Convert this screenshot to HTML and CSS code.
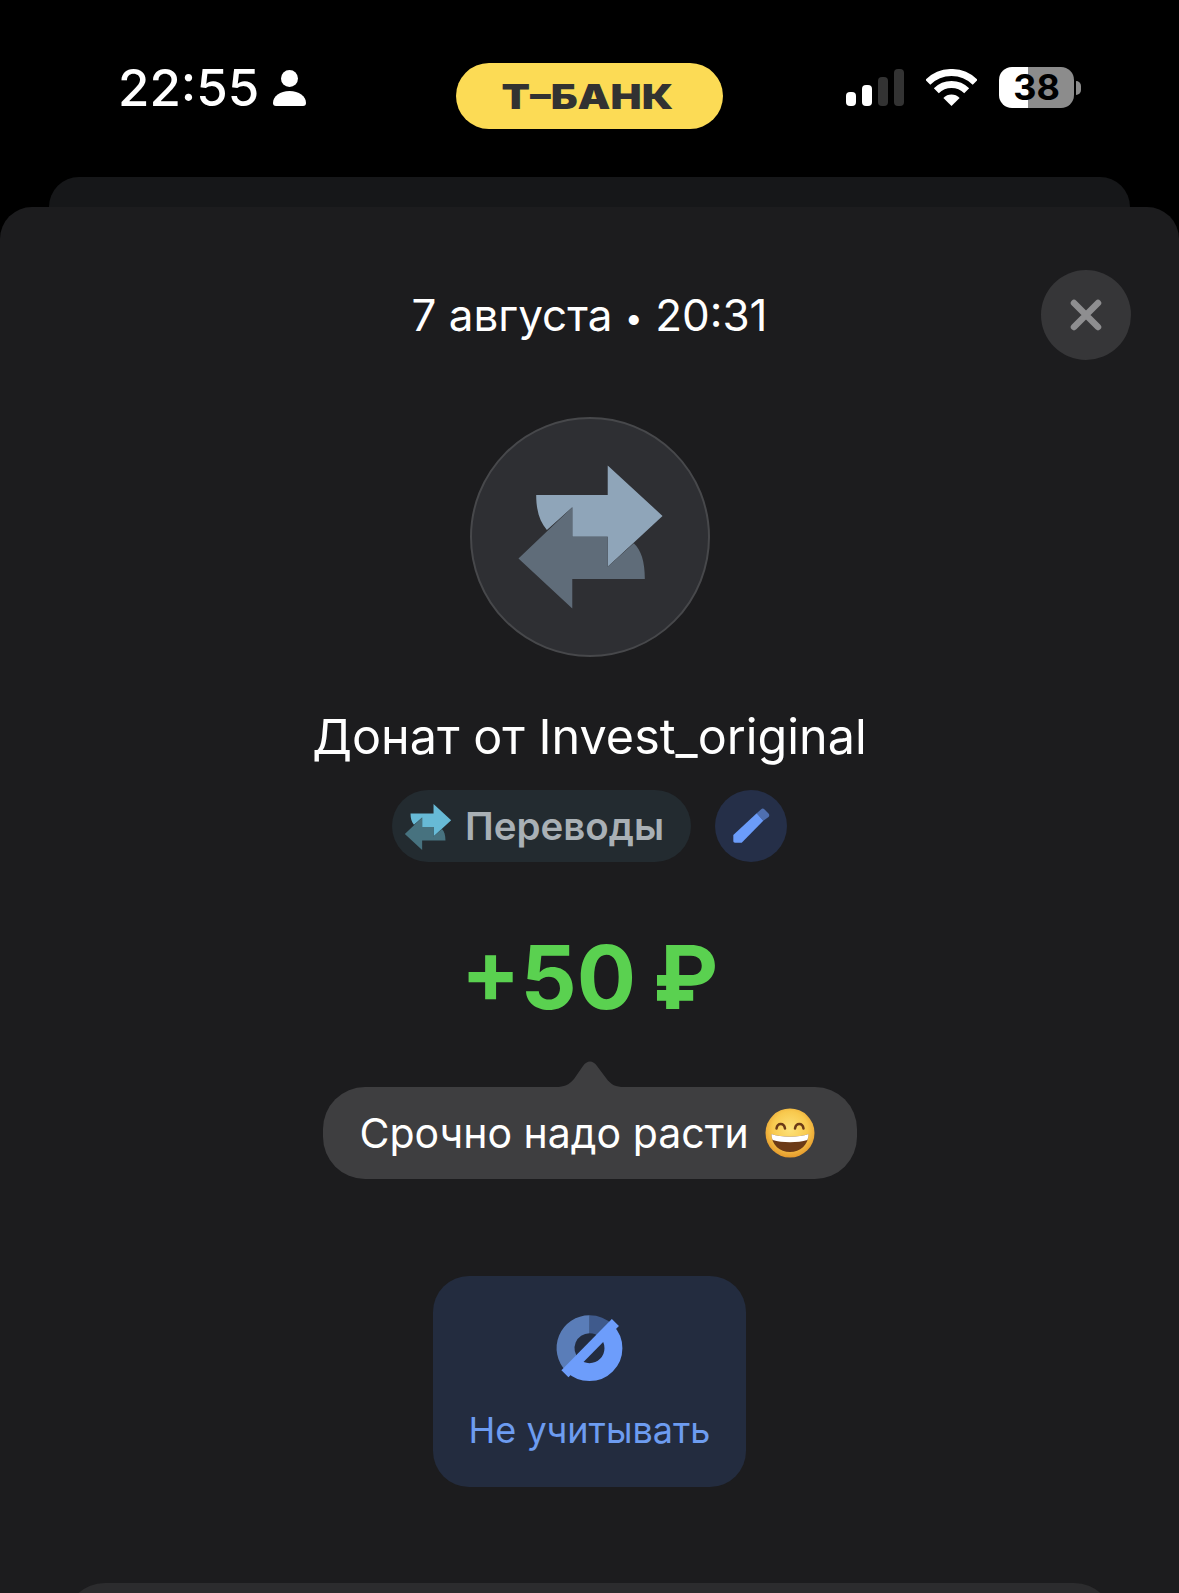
FILE: index.html
```html
<!DOCTYPE html>
<html lang="ru">
<head>
    <meta charset="UTF-8">
    <meta name="viewport" content="width=device-width, initial-scale=1.0">
    <title>Донат от Invest_original</title>
    <link rel="stylesheet" href="styles.css">
</head>
<body>
<div class="screen">
    <div class="status-bar">
        <div class="status-left">
            <span class="clock">22:55</span>
            <svg class="person" viewBox="0 0 33 36">
                <circle cx="16.5" cy="8.5" r="8.5"/>
                <path d="M0 33C0 26 7 21 16.5 21S33 26 33 33C33 35 32 36 30 36H3C1 36 0 35 0 33Z"/>
            </svg>
        </div>
        <div class="bank-pill"><span class="bank-name">Т–БАНК</span></div>
        <div class="status-right">
            <div class="signal">
                <span class="bar bar-1"></span>
                <span class="bar bar-2"></span>
                <span class="bar bar-3"></span>
                <span class="bar bar-4"></span>
            </div>
            <svg class="wifi" viewBox="0 0 51 37">
                <path class="wifi-arc" d="M1.8 13.3A33.5 33.5 0 0 1 49.2 13.3"/>
                <path class="wifi-arc" d="M10.3 21.8A21.5 21.5 0 0 1 40.7 21.8"/>
                <path d="M25.5 37L17.4 28.9A11.5 11.5 0 0 1 33.6 28.9Z"/>
            </svg>
            <div class="battery">38</div>
            <span class="battery-tip"></span>
        </div>
    </div>

    <div class="sheet-back"></div>

    <div class="sheet">
        <button class="close-btn">
            <svg viewBox="0 0 32 32"><path d="M4 4L28 28M28 4L4 28"/></svg>
        </button>

        <div class="date">7 августа <span class="date-dot">•</span> 20:31</div>

        <div class="avatar">
            <svg viewBox="60 52 718 718">
                <path class="arrow-light" d="M258 285H472V197L636 348L472 500V410H366V322L290 390C268 365 258 330 258 285Z"/>
                <path class="arrow-dark" d="M205 475L366 322V410H472V500L550 430C572 450 583 485 583 537H366V625Z"/>
            </svg>
        </div>

        <div class="title">Донат от Invest_original</div>

        <div class="tags">
            <div class="category">
                <svg class="category-icon" viewBox="205 197 431 428">
                    <path class="chip-light" d="M258 285H472V197L636 348L472 500V410H366V322L290 390C268 365 258 330 258 285Z"/>
                    <path class="chip-dark" d="M205 475L366 322V410H472V500L550 430C572 450 583 485 583 537H366V625Z"/>
                </svg>
                <span>Переводы</span>
            </div>
            <div class="edit-btn">
                <svg viewBox="0 0 72 72">
                    <path class="pencil-cap" d="M41.700 23.300L46.200 19.300C47 18.300 48.500 18.300 49.300 19.300L53.500 23.500C54.500 24.500 54.500 26 53.500 27L48.300 30.700Z"/>
                    <path class="pencil-body" d="M41.700 23.300L48.300 30.700L26.700 52.700H20C19 52.700 18.300 52 18.300 51V45Z"/>
                </svg>
            </div>
        </div>

        <div class="amount">+50 ₽</div>

        <div class="comment">
            <svg class="comment-tip" viewBox="0 0 68 28">
                <path d="M0 28C8 28 13 26 18 20L27 7C31 1 37 1 41 7L50 19C55 26 60 28 68 28Z"/>
            </svg>
            <span>Срочно надо расти</span>
            <svg class="emoji" viewBox="0 0 50 50" role="img" aria-label="😄">
                <defs>
                    <radialGradient id="face" cx="50%" cy="42%" r="58%">
                        <stop offset="0%" stop-color="#fde27a"/>
                        <stop offset="62%" stop-color="#f8c94e"/>
                        <stop offset="100%" stop-color="#e59a2c"/>
                    </radialGradient>
                </defs>
                <circle cx="25" cy="25" r="24.5" fill="url(#face)"/>
                <path class="emoji-eye" d="M11.5 20.5C12.5 14.5 19 14.5 20 20.5"/>
                <path class="emoji-eye" d="M30 20.5C31 14.5 37.500 14.500 38.500 20.5"/>
                <path d="M6.500 26C16 29.500 34 29.500 43.500 26C43.500 37 35 44 25 44S6.500 37 6.500 26Z" fill="#6b3a17"/>
                <path d="M6.500 26C16 29.500 34 29.500 43.500 26C43.500 28.500 43 30.500 42.300 32C33 35 17 35 7.700 32C7 30.500 6.500 28.500 6.500 26Z" fill="#fff"/>
            </svg>
        </div>

        <div class="action">
            <svg class="action-icon" viewBox="400 155 220 220">
                <path class="ring-dark" d="M510 192A72 72 0 0 1 561 213"/>
                <path class="ring-mid" d="M459 315A72 72 0 0 1 510 192"/>
                <path class="ring-bright" d="M561 213A72 72 0 0 1 459 315"/>
                <path class="ring-slash" d="M436 341L588 187"/>
            </svg>
            <span>Не учитывать</span>
        </div>

        <div class="next-card"></div>
    </div>
</div>
</body>
</html>
```

FILE: styles.css
```css
body {
    margin: 0;
    background-color: #000;
    font-family: Inter, "Noto Sans", sans-serif;
    color: #fff;
}

.screen {
    width: 1179px;
    height: 1593px;
    overflow: hidden;
    display: flex;
    flex-direction: column;
}

/* status bar */
.status-bar {
    height: 177px;
    box-sizing: border-box;
    padding-top: 63px;
    display: grid;
    grid-template-columns: 1fr auto 1fr;
    align-items: start;
    flex-shrink: 0;
}

.status-left {
    display: flex;
    align-items: flex-end;
    gap: 14px;
    padding: 3px 0 0 118px;
}

.clock {
    font-size: 51px;
    font-weight: 500;
    line-height: 43px;
}

.person {
    width: 33px;
    height: 36px;
    margin-bottom: 3px;
    fill: #fff;
}

.bank-pill {
    width: 267px;
    height: 66px;
    border-radius: 33px;
    background-color: #fcdb55;
    display: flex;
    align-items: center;
    justify-content: center;
}

.bank-name {
    display: inline-block;
    margin-right: 4px;
    color: #323232;
    font-size: 34px;
    font-weight: 900;
    transform: scaleX(1.22);
}

.status-right {
    display: flex;
    align-items: center;
    justify-content: flex-end;
    padding: 4px 98px 0 0;
}

.signal {
    display: flex;
    align-items: flex-end;
    gap: 6px;
    height: 37px;
    margin-right: 22px;
}

.bar {
    width: 10px;
    border-radius: 4px;
    background-color: #fff;
}

.bar-1 { height: 14px; }
.bar-2 { height: 21px; }
.bar-3 { height: 29px; background-color: #333; }
.bar-4 { height: 37px; background-color: #333; }

.wifi {
    width: 51px;
    height: 37px;
    margin-right: 22px;
    fill: #fff;
}

.wifi-arc {
    fill: none;
    stroke: #fff;
    stroke-width: 7;
}

.battery {
    width: 75px;
    height: 41px;
    border-radius: 13px;
    background: linear-gradient(90deg, #fff 39%, #8c8c8c 39%);
    color: #000;
    font-size: 36px;
    font-weight: 700;
    line-height: 41px;
    text-align: center;
}

.battery-tip {
    width: 5px;
    height: 14px;
    margin-left: 2px;
    border-radius: 0 5px 5px 0;
    background-color: #8c8c8c;
}

/* sheets */
.sheet-back {
    height: 30px;
    margin: 0 49px;
    border-radius: 30px 30px 0 0;
    background-color: #161719;
    flex-shrink: 0;
}

.sheet {
    position: relative;
    flex: 1;
    border-radius: 32px 32px 0 0;
    background-color: #1c1c1e;
    display: flex;
    flex-direction: column;
    align-items: center;
}

.close-btn {
    position: absolute;
    top: 63px;
    right: 48px;
    width: 90px;
    height: 90px;
    padding: 29px;
    border: none;
    border-radius: 50%;
    background-color: #363638;
}

.close-btn svg {
    display: block;
    fill: none;
    stroke: #8e8e90;
    stroke-width: 6.500;
    stroke-linecap: round;
}

.date {
    margin-top: 81px;
    font-size: 44px;
    line-height: 54px;
}

.date-dot {
    font-size: 32px;
    line-height: 0;
    vertical-align: 2px;
}

.avatar {
    width: 240px;
    height: 240px;
    margin-top: 75px;
    box-sizing: border-box;
    border: 2px solid #47484b;
    border-radius: 50%;
    background-color: #2e2f33;
    flex-shrink: 0;
}

.avatar svg {
    display: block;
    width: 240px;
    height: 240px;
    margin: -2px;
}

.arrow-light { fill: #8fa5b9; }
.arrow-dark { fill: #5f6c79; }
.chip-light { fill: #67bad6; }
.chip-dark { fill: #47727f; }

.title {
    margin-top: 50px;
    font-size: 48.500px;
    line-height: 60px;
}

.tags {
    display: flex;
    gap: 24px;
    margin-top: 23px;
}

.category {
    width: 299px;
    height: 72px;
    box-sizing: border-box;
    padding-left: 12px;
    border-radius: 36px;
    background-color: #232b30;
    color: #a9b0b5;
    font-size: 38.500px;
    font-weight: 600;
    display: flex;
    align-items: center;
    gap: 13px;
}

.category-icon {
    width: 48px;
    height: 46px;
    margin-top: 2px;
}

.edit-btn {
    width: 72px;
    height: 72px;
    border-radius: 50%;
    background-color: #252f48;
}

.edit-btn svg {
    display: block;
}

.pencil-cap { fill: #4f6fb0; }
.pencil-body { fill: #6b9cfa; }

.amount {
    margin-top: 61px;
    font-size: 88px;
    font-weight: 700;
    line-height: 109px;
    word-spacing: -4px;
    color: #5ad150;
}

.comment {
    position: relative;
    width: 534px;
    height: 92px;
    box-sizing: border-box;
    margin-top: 55px;
    padding-left: 37px;
    border-radius: 42px;
    background-color: #3e3e40;
    font-size: 41px;
    display: flex;
    align-items: center;
    gap: 16px;
}

.comment-tip {
    position: absolute;
    top: -29px;
    left: 233px;
    width: 68px;
    height: 30px;
    fill: #3e3e40;
}

.emoji {
    width: 50px;
    height: 50px;
}

.emoji-eye {
    fill: none;
    stroke: #6b3a17;
    stroke-width: 2.500;
    stroke-linecap: round;
}

.action {
    width: 313px;
    height: 211px;
    box-sizing: border-box;
    margin-top: 97px;
    padding-top: 36px;
    border-radius: 36px;
    background-color: #232c3f;
    color: #6d9cf0;
    font-size: 36px;
    display: flex;
    flex-direction: column;
    align-items: center;
    gap: 23px;
    flex-shrink: 0;
}

.action-icon {
    width: 73px;
    height: 73px;
    fill: none;
    stroke-width: 54;
}

.ring-dark { stroke: #3f5a8c; }
.ring-mid { stroke: #5a7db8; }
.ring-bright { stroke: #6d9dfb; }

.ring-slash {
    stroke: #6d9dfb;
    stroke-width: 30;
}

.next-card {
    width: 1049px;
    height: 40px;
    margin-top: 96px;
    border-radius: 54px 54px 0 0;
    background-color: #2c2c2e;
    flex-shrink: 0;
}
```
